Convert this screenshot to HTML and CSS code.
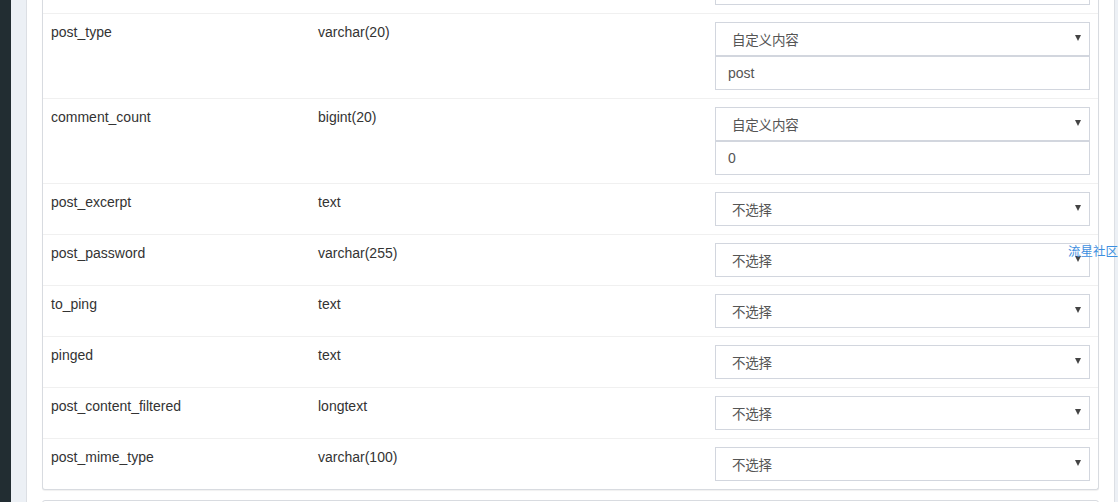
FILE: index.html
```html
<!DOCTYPE html>
<html>
<head>
<meta charset="utf-8">
<link rel="stylesheet" href="styles.css">
</head>
<body>
<div class="layout">
  <aside class="sidebar"></aside>
  <main class="content">
    <div class="outer">
      <section class="card">
        <div class="row">
          <div class="cell"></div>
          <div class="cell"></div>
          <div class="cell"><div class="select"></div></div>
        </div>
        <div class="row">
          <div class="cell">post_type</div>
          <div class="cell">varchar(20)</div>
          <div class="cell">
            <div class="select"><span>自定义内容</span><i class="arrow"></i></div>
            <div class="input">post</div>
          </div>
        </div>
        <div class="row">
          <div class="cell">comment_count</div>
          <div class="cell">bigint(20)</div>
          <div class="cell">
            <div class="select"><span>自定义内容</span><i class="arrow"></i></div>
            <div class="input">0</div>
          </div>
        </div>
        <div class="row">
          <div class="cell">post_excerpt</div>
          <div class="cell">text</div>
          <div class="cell"><div class="select"><span>不选择</span><i class="arrow"></i></div></div>
        </div>
        <div class="row">
          <div class="cell">post_password</div>
          <div class="cell">varchar(255)</div>
          <div class="cell"><div class="select"><span>不选择</span><i class="arrow"></i></div></div>
        </div>
        <div class="row">
          <div class="cell">to_ping</div>
          <div class="cell">text</div>
          <div class="cell"><div class="select"><span>不选择</span><i class="arrow"></i></div></div>
        </div>
        <div class="row">
          <div class="cell">pinged</div>
          <div class="cell">text</div>
          <div class="cell"><div class="select"><span>不选择</span><i class="arrow"></i></div></div>
        </div>
        <div class="row">
          <div class="cell">post_content_filtered</div>
          <div class="cell">longtext</div>
          <div class="cell"><div class="select"><span>不选择</span><i class="arrow"></i></div></div>
        </div>
        <div class="row">
          <div class="cell">post_mime_type</div>
          <div class="cell">varchar(100)</div>
          <div class="cell"><div class="select"><span>不选择</span><i class="arrow"></i></div></div>
        </div>
      </section>
      <section class="card next"></section>
    </div>
  </main>
</div>
<div class="watermark">流星社区</div>
</body>
</html>
```
FILE: styles.css
```css
html, body {
  margin: 0;
  padding: 0;
  height: 100%;
  overflow: hidden;
  background: #ecf0f5;
}
body {
  font-family: "Liberation Sans", Arial, "Noto Sans CJK SC", sans-serif;
  font-size: 14px;
  line-height: 20px;
  color: #333;
  position: relative;
}
.layout {
  display: flex;
  height: 100%;
}
.sidebar {
  width: 11px;
  flex: none;
  background: #222d32;
}
.content {
  flex: 1;
  padding-left: 15px;
  padding-right: 3px;
}
.outer {
  background: #fff;
  border-left: 1px solid #dcdfe4;
  border-right: 1px solid #dcdfe4;
  padding: 0 15px;
  margin-top: -47px;
  height: 600px;
}
.card {
  border: 1px solid #d8dbe0;
  border-top: none;
  border-radius: 0 0 3px 3px;
  box-shadow: 0 1px 1px rgba(0,0,0,0.06);
  background: #fff;
  padding-top: 9px;
}
.card.next {
  margin-top: 10px;
  border-top: 1px solid #d8dbe0;
  border-radius: 3px;
  height: 40px;
  padding: 0;
}
.row {
  display: grid;
  grid-template-columns: 267px 397px 1fr;
  border-top: 1px solid #f0f0f0;
}
.cell {
  padding: 8px;
}
.select, .input {
  height: 34px;
  box-sizing: border-box;
  border: 1px solid #d2d6de;
  background: #fff;
  display: flex;
  align-items: center;
  color: #555;
}
.select {
  padding-left: 16px;
  padding-right: 8px;
  justify-content: space-between;
}
.select span {
  font-family: "Noto Sans CJK SC", "Liberation Sans", sans-serif;
  font-size: 13.5px;
  letter-spacing: -0.2px;
}
.input {
  padding-left: 12px;
}
.arrow {
  width: 0;
  height: 0;
  border-left: 3.5px solid transparent;
  border-right: 3.5px solid transparent;
  border-top: 6px solid #444;
  margin-top: -3px;
}
.watermark {
  position: absolute;
  left: 1068px;
  top: 243px;
  font-family: "Noto Sans CJK SC", sans-serif;
  font-size: 12.5px;
  line-height: 16px;
  color: #3d8fe0;
  white-space: nowrap;
}
```
